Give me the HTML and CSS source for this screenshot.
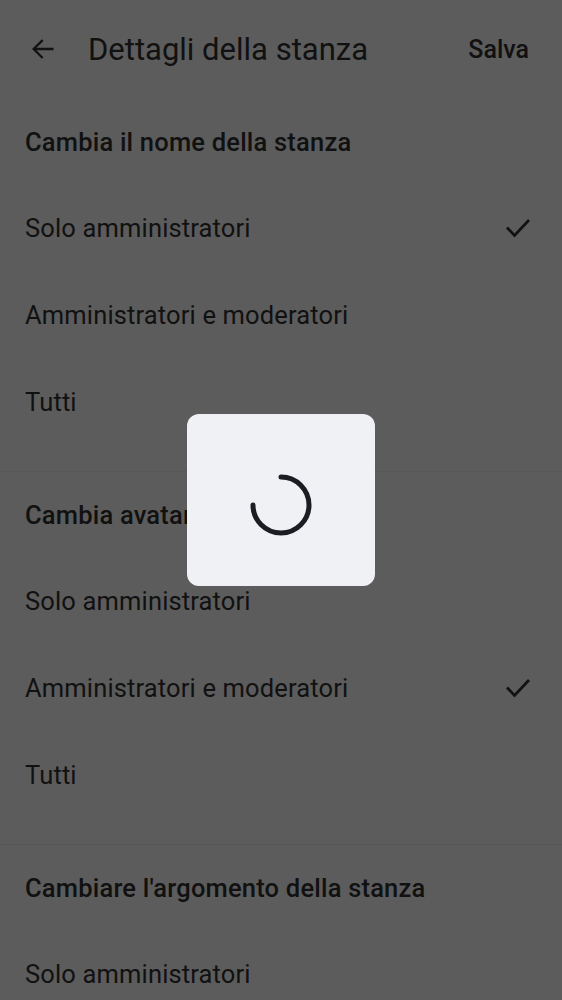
FILE: index.html
```html
<!DOCTYPE html>
<html lang="it">
<head>
<meta charset="utf-8">
<link rel="stylesheet" href="styles.css">
</head>
<body>
<div class="screen">
  <header class="topbar">
    <svg class="back" width="28" height="28" viewBox="0 0 24 24"><path d="M20 12H4.5M11 5l-7 7 7 7" fill="none" stroke="#121212" stroke-width="2" stroke-linecap="square"/></svg>
    <div class="title">Dettagli della stanza</div>
    <div class="save">Salva</div>
  </header>

  <section class="section">
    <div class="sec-title">Cambia il nome della stanza</div>
    <div class="item"><span>Solo amministratori</span><svg class="check" width="28" height="28" viewBox="0 0 28 28"><path d="M3 12.5l7.5 8L25 5" fill="none" stroke="#121212" stroke-width="2.7"/></svg></div>
    <div class="item"><span>Amministratori e moderatori</span></div>
    <div class="item"><span>Tutti</span></div>
  </section>

  <section class="section">
    <div class="sec-title">Cambia avatar della stanza</div>
    <div class="item"><span>Solo amministratori</span></div>
    <div class="item"><span>Amministratori e moderatori</span><svg class="check" width="28" height="28" viewBox="0 0 28 28"><path d="M3 12.5l7.5 8L25 5" fill="none" stroke="#121212" stroke-width="2.7"/></svg></div>
    <div class="item"><span>Tutti</span></div>
  </section>

  <section class="section">
    <div class="sec-title">Cambiare l'argomento della stanza</div>
    <div class="item"><span>Solo amministratori</span></div>
    <div class="item"><span>Amministratori e moderatori</span></div>
    <div class="item"><span>Tutti</span></div>
  </section>

  <div class="dialog">
    <svg width="64" height="64" viewBox="0 0 64 64"><path d="M32 4A28 28 0 1 1 4 32" fill="none" stroke="#1b1d22" stroke-width="5" stroke-linecap="round"/></svg>
  </div>
</div>
</body>
</html>
```

FILE: styles.css
```css
html, body {
  margin: 0;
  padding: 0;
  background: #5c5c5c;
}
.screen {
  width: 562px;
  height: 1000px;
  overflow: hidden;
  position: relative;
  font-family: Roboto, "Noto Sans", sans-serif;
  color: #111111;
}
.topbar {
  height: 99px;
  display: flex;
  align-items: center;
  padding: 0 33px 0 29px;
  box-sizing: border-box;
}
.back {
  margin-top: -1px;
  margin-right: 31px;
}
.title {
  font-size: 31px;
  flex: 1;
  margin-top: -1px;
}
.save {
  font-size: 25px;
  font-weight: 500;
  margin-top: -1px;
}
.section {
  padding-bottom: 25px;
  border-bottom: 1px solid #575757;
}
.sec-title {
  height: 86px;
  display: flex;
  align-items: center;
  padding-left: 25px;
  font-size: 25.5px;
  font-weight: 500;
  letter-spacing: 0.2px;
}
.item {
  height: 87px;
  display: flex;
  align-items: center;
  justify-content: space-between;
  padding: 0 30px 0 25px;
  font-size: 25.5px;
  letter-spacing: 0.15px;
}
.item span {
  margin-top: -2px;
}
.dialog {
  position: absolute;
  left: 187px;
  top: 414px;
  width: 188px;
  height: 172px;
  padding-top: 9px;
  box-sizing: border-box;
  border-radius: 12px;
  background: #f0f1f5;
  display: flex;
  align-items: center;
  justify-content: center;
}
```
